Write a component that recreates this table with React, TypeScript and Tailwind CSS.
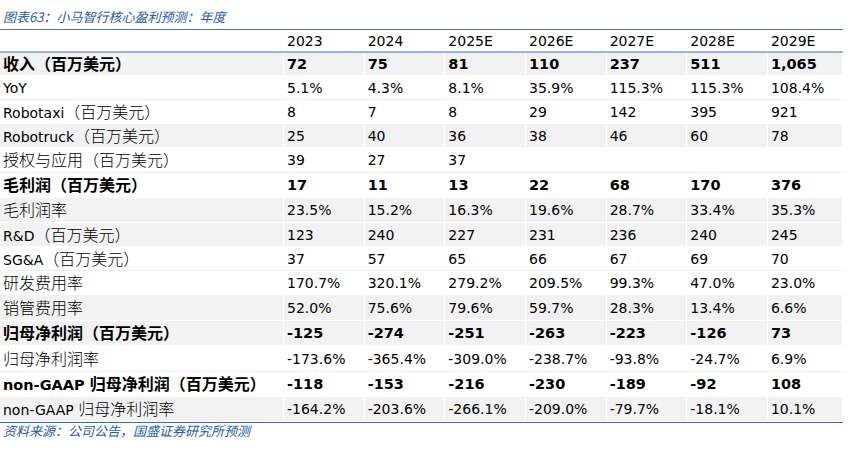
import React from "react";

type Row = { label: string; bold?: boolean; gray?: boolean; h: number; vals: string[] };

const rows: Row[] = [
  { label: "收入（百万美元）", bold: true, gray: true, h: 23, vals: ["72", "75", "81", "110", "237", "511", "1,065"] },
  { label: "YoY", h: 24, vals: ["5.1%", "4.3%", "8.1%", "35.9%", "115.3%", "115.3%", "108.4%"] },
  { label: "Robotaxi（百万美元）", h: 24, vals: ["8", "7", "8", "29", "142", "395", "921"] },
  { label: "Robotruck（百万美元）", gray: true, h: 24, vals: ["25", "40", "36", "38", "46", "60", "78"] },
  { label: "授权与应用（百万美元）", h: 25, vals: ["39", "27", "37", "", "", "", ""] },
  { label: "毛利润（百万美元）", bold: true, h: 25, vals: ["17", "11", "13", "22", "68", "170", "376"] },
  { label: "毛利润率", gray: true, h: 25, vals: ["23.5%", "15.2%", "16.3%", "19.6%", "28.7%", "33.4%", "35.3%"] },
  { label: "R&D（百万美元）", gray: true, h: 24, vals: ["123", "240", "227", "231", "236", "240", "245"] },
  { label: "SG&A（百万美元）", h: 24, vals: ["37", "57", "65", "66", "67", "69", "70"] },
  { label: "研发费用率", h: 24, vals: ["170.7%", "320.1%", "279.2%", "209.5%", "99.3%", "47.0%", "23.0%"] },
  { label: "销管费用率", gray: true, h: 26, vals: ["52.0%", "75.6%", "79.6%", "59.7%", "28.3%", "13.4%", "6.6%"] },
  { label: "归母净利润（百万美元）", bold: true, gray: true, h: 25, vals: ["-125", "-274", "-251", "-263", "-223", "-126", "73"] },
  { label: "归母净利润率", h: 26, vals: ["-173.6%", "-365.4%", "-309.0%", "-238.7%", "-93.8%", "-24.7%", "6.9%"] },
  { label: "non-GAAP 归母净利润（百万美元）", bold: true, h: 25, vals: ["-118", "-153", "-216", "-230", "-189", "-92", "108"] },
  { label: "non-GAAP 归母净利润率", gray: true, h: 25, vals: ["-164.2%", "-203.6%", "-266.1%", "-209.0%", "-79.7%", "-18.1%", "10.1%"] },
];

const years = ["2023", "2024", "2025E", "2026E", "2027E", "2028E", "2029E"];
const colW = ["w-[80.67px]", "w-[80.67px]", "w-[80.67px]", "w-[80.67px]", "w-[80.67px]", "w-[80.67px]", "w-[75px]"];

function Label({ text, bold }: { text: string; bold?: boolean }) {
  const parts = text.split(/([\u3000-\u9fff\uff00-\uffef]+)/).filter((p) => p.length > 0);
  return (
    <span className="whitespace-pre">
      {parts.map((p, i) =>
        /[\u3000-\u9fff\uff00-\uffef]/.test(p) ? (
          <span
            key={i}
            className={`font-['Noto_Sans_CJK_SC',sans-serif] text-[16px] ${bold ? "font-bold" : "font-light"}`}
          >
            {p}
          </span>
        ) : (
          <span key={i} className={bold ? "text-[14.5px]" : "text-[14px]"}>
            {p}
          </span>
        )
      )}
    </span>
  );
}

export default function App() {
  return (
    <div className="w-[855px] h-[460px] bg-white font-['DejaVu_Sans','Noto_Sans_CJK_SC',sans-serif] text-black">
      <div className="h-[29px] pl-[3px] pt-[9px] text-[13px] leading-[16px] italic text-[#2b5aa6] font-['Noto_Sans_CJK_SC',sans-serif]">
        图表63：小马智行核心盈利预测：年度
      </div>
      <div className="w-[843px]">
        <div className="flex h-[24px] items-center border-t-[1.5px] border-b-2 border-t-[#4a72bd] border-b-[#9ab3de] text-[14px] leading-none">
          <div className="w-[284px]" />
          {years.map((y, i) => (
            <div key={y} className={`${colW[i]} pl-[3px]`}>
              {y}
            </div>
          ))}
        </div>
        {rows.map((r, ri) => {
          const next = rows[ri + 1];
          const faint = !r.gray && next && !next.gray;
          return (
            <div
              key={ri}
              style={{ height: r.h }}
              className={`flex items-stretch border-b ${faint ? "border-[#ececec]" : "border-white"} ${r.gray ? "bg-[#f2f2f2]" : "bg-white"} ${r.bold ? "font-bold" : ""}`}
            >
              <div className="w-[284px] pl-[3px] flex items-center leading-none border-r border-white">
                <Label text={r.label} bold={r.bold} />
              </div>
              {r.vals.map((v, i) => (
                <div
                  key={i}
                  className={`${colW[i]} pl-[3px] flex items-center leading-none border-r border-white ${r.bold ? "text-[14.5px]" : "text-[14px]"}`}
                >
                  {v}
                </div>
              ))}
            </div>
          );
        })}
        <div className="border-t-[1.5px] border-[#2e6bbf]" />
      </div>
      <div className="pl-[3px] pt-[1px] text-[13px] leading-[14px] italic text-[#2b5aa6] font-['Noto_Sans_CJK_SC',sans-serif]">
        资料来源：公司公告，国盛证券研究所预测
      </div>
    </div>
  );
}
